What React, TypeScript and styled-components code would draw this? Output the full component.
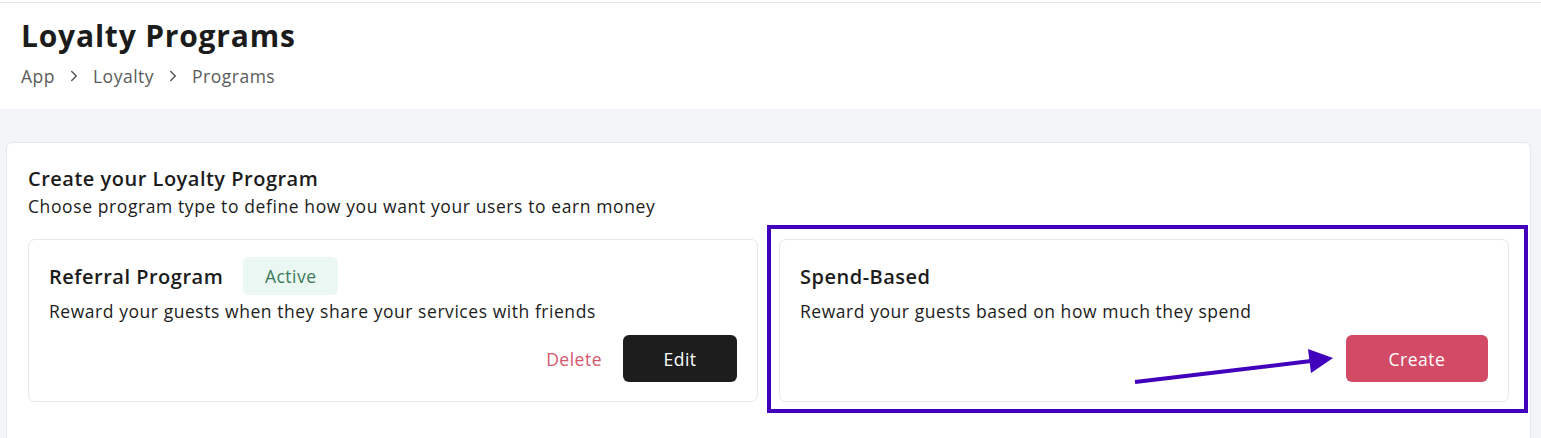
import React from 'react'
import styled, { createGlobalStyle } from 'styled-components'

const ink = '#1c1c1c'
const muted = '#5b5b5b'
const line = '#e6e7ea'
const rose = '#d24a66'
const violet = '#4100bb'

const GlobalStyle = createGlobalStyle`
  body {
    margin: 0;
    font-family: "Open Sans", "Noto Sans", sans-serif;
    color: ${ink};
    background: #f4f5f8;
  }
  * { box-sizing: border-box; }
`

const Page = styled.div`
  min-height: 100vh;
  background: #f4f5f8;
`

const Header = styled.header`
  background: #fff;
  padding-top: 2px;
`

const HeaderInner = styled.div`
  border-top: 1px solid #e3e4e6;
  padding: 14px 21px 21px;
  display: flex;
  flex-direction: column;
  gap: 10px;
`

const PageTitle = styled.h1`
  margin: 0;
  font-size: 30px;
  line-height: 37px;
  font-weight: 700;
  letter-spacing: 0.8px;
`

const Crumbs = styled.nav`
  display: flex;
  align-items: center;
  gap: 8px;
  font-size: 17.5px;
  letter-spacing: 0.5px;
  color: ${muted};
`

const Chevron = styled.svg`
  width: 18px;
  height: 18px;
  margin: 0 2px;
`

const Main = styled.main`
  padding: 33px 10px 0 6px;
`

const Panel = styled.section`
  background: #fff;
  border: 1px solid ${line};
  border-radius: 6px;
  padding: 22px 21px 40px;
`

const PanelTitle = styled.h2`
  margin: 0;
  font-size: 20px;
  line-height: 28px;
  font-weight: 600;
  letter-spacing: 0.5px;
`

const PanelText = styled.p`
  margin: 0 0 20px;
  font-size: 17.5px;
  line-height: 26px;
  letter-spacing: 0.6px;
`

const Grid = styled.div`
  display: grid;
  grid-template-columns: 1fr 1fr;
  gap: 21px;
`

const Slot = styled.div`
  position: relative;
`

const Card = styled.div`
  border: 1px solid ${line};
  border-radius: 7px;
  padding: 17px 20px 19px;
  display: flex;
  flex-direction: column;
  height: 163px;
`

const CardHead = styled.div`
  display: flex;
  align-items: center;
  gap: 20px;
  height: 38px;
`

const CardTitle = styled.h3`
  margin: 0;
  font-size: 20px;
  font-weight: 600;
  letter-spacing: 0.5px;
`

const Badge = styled.span`
  background: #ebf7f2;
  color: #3b7a5a;
  border-radius: 6px;
  font-size: 17.5px;
  font-weight: 500;
  letter-spacing: 0.5px;
  height: 38px;
  width: 95px;
  justify-content: center;
  display: flex;
  align-items: center;
`

const CardText = styled.p`
  margin: 4px 0 0;
  font-size: 17.5px;
  line-height: 24px;
  letter-spacing: 0.55px;
`

const Actions = styled.div`
  margin-top: auto;
  display: flex;
  justify-content: flex-end;
  align-items: center;
  gap: 21px;
`

const TextButton = styled.button`
  border: 0;
  background: none;
  padding: 0;
  font: inherit;
  font-size: 17.5px;
  letter-spacing: 0.5px;
  color: #d5566f;
  cursor: pointer;
`

const Button = styled.button<{ $tone: 'dark' | 'rose' }>`
  border: 0;
  border-radius: 6px;
  height: 47px;
  width: ${p => (p.$tone === 'dark' ? '114px' : '142px')};
  background: ${p => (p.$tone === 'dark' ? '#1d1d1d' : rose)};
  color: #fff;
  font: inherit;
  font-size: 17.5px;
  font-weight: 500;
  letter-spacing: 0.5px;
  cursor: pointer;
`

const Highlight = styled.div`
  position: absolute;
  top: -14px;
  left: -12px;
  right: -19px;
  bottom: -11px;
  border: 4px solid ${violet};
  pointer-events: none;
`

const Arrow = styled.svg`
  position: absolute;
  left: 350px;
  top: 105px;
  width: 210px;
  height: 45px;
  overflow: visible;
`

const Sep = () => (
  <Chevron viewBox="0 0 24 24" fill="none" stroke="#555" strokeWidth="2" strokeLinecap="round" strokeLinejoin="round">
    <path d="M9 6l6 6-6 6" />
  </Chevron>
)

export default function App() {
  return (
    <Page>
      <GlobalStyle />
      <Header>
        <HeaderInner>
          <PageTitle>Loyalty Programs</PageTitle>
          <Crumbs>
            <span>App</span>
            <Sep />
            <span>Loyalty</span>
            <Sep />
            <span>Programs</span>
          </Crumbs>
        </HeaderInner>
      </Header>
      <Main>
        <Panel>
          <PanelTitle>Create your Loyalty Program</PanelTitle>
          <PanelText>Choose program type to define how you want your users to earn money</PanelText>
          <Grid>
            <Slot>
              <Card>
                <CardHead>
                  <CardTitle>Referral Program</CardTitle>
                  <Badge>Active</Badge>
                </CardHead>
                <CardText>Reward your guests when they share your services with friends</CardText>
                <Actions>
                  <TextButton>Delete</TextButton>
                  <Button $tone="dark">Edit</Button>
                </Actions>
              </Card>
            </Slot>
            <Slot>
              <Card>
                <CardHead>
                  <CardTitle>Spend-Based</CardTitle>
                </CardHead>
                <CardText>Reward your guests based on how much they spend</CardText>
                <Actions>
                  <Button $tone="rose">Create</Button>
                </Actions>
              </Card>
              <Highlight />
              <Arrow viewBox="0 0 210 45">
                <line x1="6" y1="38" x2="182" y2="17" stroke={violet} strokeWidth="4" />
                <polygon points="179,5 182,29 204,14" fill={violet} />
              </Arrow>
            </Slot>
          </Grid>
        </Panel>
      </Main>
    </Page>
  )
}
